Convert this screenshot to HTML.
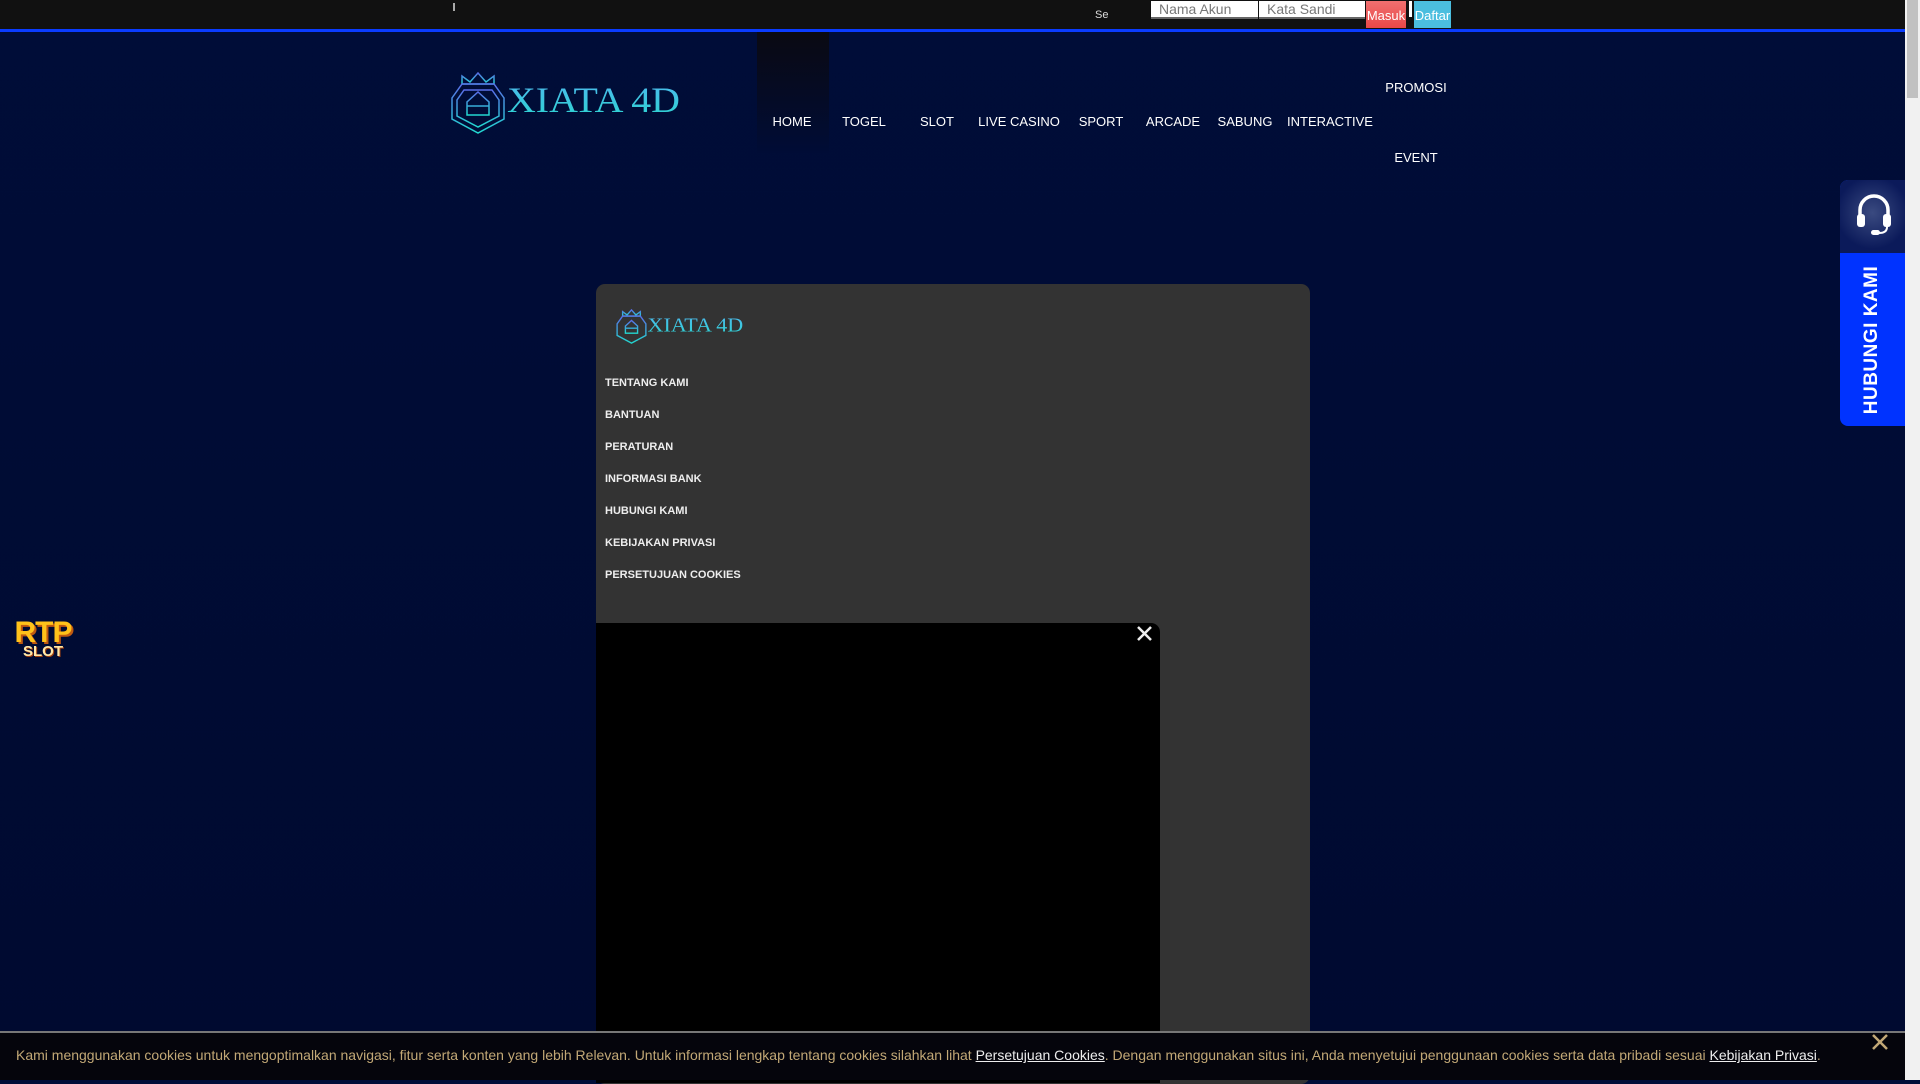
<!DOCTYPE html>
<html><head><meta charset="utf-8"><style>
*{margin:0;padding:0;box-sizing:border-box}
body{width:1920px;height:1080px;overflow:hidden;background:linear-gradient(#000d38,#000a30);font-family:"Liberation Sans",sans-serif;position:relative;color:#fff}
.abs{position:absolute}
.top{left:0;top:0;width:1905px;height:29px;background:#111}
.bl{left:0;top:29px;width:1905px;height:3px;background:#0a3cff}
.in{height:18px;background:#fff;border-bottom:2px solid #666;color:#777;font-size:14px;padding-left:8px;line-height:17px}
.nav{font-size:13px;color:#fff;transform:translateX(-50%);white-space:nowrap}
.panel{left:596px;top:284px;width:714px;height:800px;background:#333;border-radius:9px}
.mi{left:605px;font-size:11px;font-weight:bold;color:#eee}
.sb{left:1905px;top:0;width:15px;height:1080px;background:#f1f1f1}
</style></head><body>
<div class="abs top"></div>
<div class="abs bl"></div>
<div class="abs" style="left:453px;top:3px;width:2px;height:8px;background:#aaa"></div>
<div class="abs" style="left:1095px;top:9px;font-size:11px;color:#ddd">Se</div>
<div class="abs in" style="left:1151px;top:1px;width:107px">Nama Akun</div>
<div class="abs in" style="left:1259px;top:1px;width:106px">Kata Sandi</div>
<div class="abs" style="left:1366px;top:1px;width:40px;height:27px;background:linear-gradient(#f07070,#e84848);font-size:13px;line-height:30px;text-align:center">Masuk</div>
<div class="abs" style="left:1409px;top:1px;width:3px;height:16px;background:#fff"></div>
<div class="abs" style="left:1414px;top:1px;width:37px;height:27px;background:#4bbedf;font-size:13px;line-height:30px;text-align:center">Daftar</div>

<svg class="abs" style="left:450px;top:68px" width="235" height="68" viewBox="0 0 235 68">
<defs><linearGradient id="g" x1="0" y1="0" x2="0" y2="1"><stop offset="0" stop-color="#5a6ee8"/><stop offset="1" stop-color="#22d8d0"/></linearGradient>
<linearGradient id="t" x1="0" y1="0" x2="0" y2="1"><stop offset="0" stop-color="#4fb8f0"/><stop offset="1" stop-color="#2bd4cf"/></linearGradient></defs>
<g fill="none" stroke="url(#g)" stroke-width="1.5">
<path d="M12 16 L12 8 L20 14 L28 5 L36 14 L44 8 L44 16 Z"/>
<path d="M12 16 L44 16 L54 30 L54 51 L28 65 L2 51 L2 30 Z"/>
<path d="M14 22 L42 22 L49 32 L49 48 L28 59 L7 48 L7 32 Z"/>
<path d="M17 47 L17 34 L28 24 L39 34 L39 47 Z M17 38 L39 38"/>
</g>
<text x="57" y="44" font-family="Liberation Serif,serif" font-size="36" fill="url(#t)" textLength="173" lengthAdjust="spacingAndGlyphs">XIATA 4D</text>
</svg>

<div class="abs" style="left:757px;top:32px;width:72px;height:121px;background:linear-gradient(#0a0a12,#000c36)"></div>
<div class="abs nav" style="left:792px;top:114px">HOME</div>
<div class="abs nav" style="left:864px;top:114px">TOGEL</div>
<div class="abs nav" style="left:937px;top:114px">SLOT</div>
<div class="abs nav" style="left:1019px;top:114px">LIVE CASINO</div>
<div class="abs nav" style="left:1101px;top:114px">SPORT</div>
<div class="abs nav" style="left:1173px;top:114px">ARCADE</div>
<div class="abs nav" style="left:1245px;top:114px">SABUNG</div>
<div class="abs nav" style="left:1330px;top:114px">INTERACTIVE</div>
<div class="abs nav" style="left:1416px;top:80px">PROMOSI</div>
<div class="abs nav" style="left:1416px;top:150px">EVENT</div>

<div class="abs panel"></div>
<svg class="abs" style="left:616px;top:306px" width="130" height="40" viewBox="0 0 235 68">
<g fill="none" stroke="url(#g)" stroke-width="2.5">
<path d="M12 16 L12 8 L20 14 L28 5 L36 14 L44 8 L44 16 Z"/>
<path d="M12 16 L44 16 L54 30 L54 51 L28 65 L2 51 L2 30 Z"/>
<path d="M17 47 L17 34 L28 24 L39 34 L39 47 Z M17 38 L39 38"/>
</g>
<text x="57" y="44" font-family="Liberation Serif,serif" font-size="36" fill="url(#t)" textLength="173" lengthAdjust="spacingAndGlyphs">XIATA 4D</text>
</svg>
<div class="abs mi" style="top:377px">TENTANG KAMI</div>
<div class="abs mi" style="top:409px">BANTUAN</div>
<div class="abs mi" style="top:441px">PERATURAN</div>
<div class="abs mi" style="top:473px">INFORMASI BANK</div>
<div class="abs mi" style="top:505px">HUBUNGI KAMI</div>
<div class="abs mi" style="top:537px">KEBIJAKAN PRIVASI</div>
<div class="abs mi" style="top:569px">PERSETUJUAN COOKIES</div>
<div class="abs" style="left:596px;top:623px;width:564px;height:460px;background:#000;border-radius:0 9px 0 0"></div>
<svg class="abs" style="left:1137px;top:626px" width="15" height="15"><path d="M1 1L14 14M14 1L1 14" stroke="#eee" stroke-width="2.5"/></svg>

<div class="abs" style="left:1840px;top:180px;width:65px;height:246px;background:#0033ff;border-radius:8px 0 0 8px;overflow:hidden">
<div style="height:73px;background:radial-gradient(circle at 50% 45%,#3a4a80,#0b1a5a 70%)"></div>
<svg class="abs" style="left:15px;top:12px" width="38" height="46" viewBox="0 0 38 46"><path d="M5 28 V18 A14 14 0 0 1 33 18 V28" fill="none" stroke="#fff" stroke-width="3.5"/><rect x="2" y="22" width="8" height="13" rx="3" fill="#fff"/><rect x="28" y="22" width="8" height="13" rx="3" fill="#fff"/><path d="M32 35 Q32 41 24 41" fill="none" stroke="#fff" stroke-width="2"/><rect x="16" y="38" width="9" height="5" rx="2.5" fill="#fff"/></svg>
<div class="abs" style="left:32px;top:160px;transform:translate(-50%,-50%) rotate(-90deg);font-size:19px;font-weight:bold;white-space:nowrap;letter-spacing:.5px">HUBUNGI KAMI</div>
</div>

<div class="abs" style="left:10px;top:618px;width:66px;text-align:center;line-height:1">
<div style="font-size:30px;font-weight:bold;color:#ffc21a;text-shadow:2px 2px 0 #c05a10;letter-spacing:-1px">RTP</div>
<div style="font-size:15px;font-weight:bold;color:#ffe9a8;text-shadow:1px 1px 0 #a04010;margin-top:-4px">SLOT</div>
</div>

<div class="abs" style="left:0;top:1031px;width:1905px;height:49px;background:#05050c;border-top:2px solid #777"></div>
<div class="abs" style="left:16px;top:1047px;font-size:14px;color:#c2a876;white-space:nowrap">Kami menggunakan cookies untuk mengoptimalkan navigasi, fitur serta konten yang lebih Relevan. Untuk informasi lengkap tentang cookies silahkan lihat <u style="color:#eee">Persetujuan Cookies</u>. Dengan menggunakan situs ini, Anda menyetujui penggunaan cookies serta data pribadi sesuai <u style="color:#eee">Kebijakan Privasi</u>.</div>
<svg class="abs" style="left:1871px;top:1033px" width="18" height="18"><path d="M2 2L16 16M16 2L2 16" stroke="#c2a876" stroke-width="2.5"/></svg>

<div class="abs sb"></div>
<div class="abs" style="left:1907px;top:0;width:11px;height:98px;background:#c1c1c1"></div>
</body></html>
